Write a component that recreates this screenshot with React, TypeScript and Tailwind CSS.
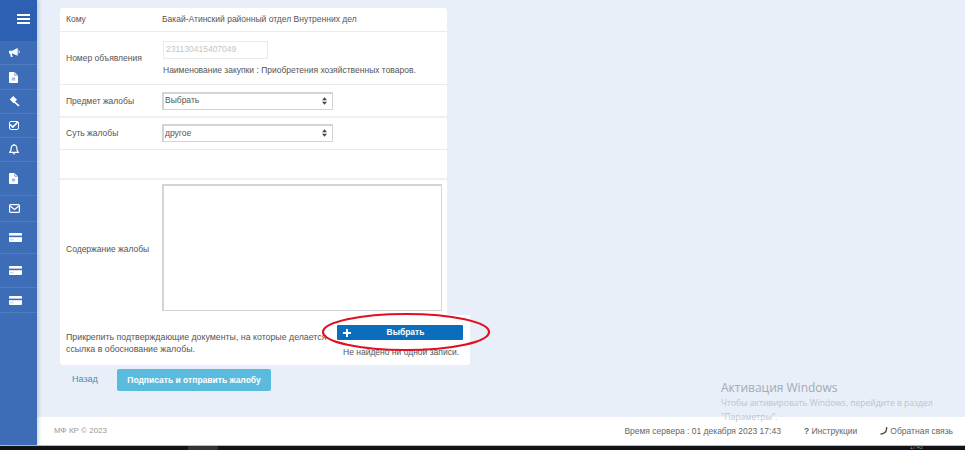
import { Check } from 'lucide-react'

function BullhornIcon() {
  return (
    <svg viewBox="0 0 12 11" className="w-[11px] h-[11px]">
      <path d="M0 3.5h3.5L9.5 .5v8.5L3.5 6.5H3L4 10.5H2L1.2 6.5H0z" fill="#fff" />
      <path d="M10.5 3.2c1 .6 1 2.6 0 3.2" fill="none" stroke="#fff" strokeWidth="1" />
    </svg>
  )
}

function FileIcon() {
  return (
    <svg viewBox="0 0 9 11" className="w-[9px] h-[11px]">
      <path d="M0 .8C0 .3.3 0 .8 0H5.5L9 3.5V10.2c0 .5-.3.8-.8.8H.8C.3 11 0 10.7 0 10.2z" fill="#fff" />
      <path d="M5.7 .4V3.3H8.6" fill="none" stroke="#3e6db8" strokeWidth=".6" />
      <rect x="2.8" y="5.5" width="3.4" height="3" fill="#a9bfe2" />
    </svg>
  )
}

function GavelIcon() {
  return (
    <svg viewBox="0 0 11 11" className="w-[11px] h-[11px]">
      <path d="M4.2 0 8 3.8 4.6 7.2.8 3.4z" fill="#fff" />
      <path d="M6 5.4 10.6 9.2 9.4 10.6 4.9 6.5z" fill="#fff" />
    </svg>
  )
}

function CheckBoxIcon() {
  return (
    <div className="relative w-[10px] h-[9px] border-[1.5px] border-white rounded-[2px]">
      <Check className="absolute left-[-1px] top-[-2px] w-[10px] h-[10px] text-white" strokeWidth={4} />
    </div>
  )
}

function BellIcon() {
  return (
    <svg viewBox="0 0 10 11" className="w-[10px] h-[11px]">
      <path d="M5 1C3 1 2.2 2.6 2.2 4.2 2.2 6.6 1.6 7.4.7 8.4H9.3C8.4 7.4 7.8 6.6 7.8 4.2 7.8 2.6 7 1 5 1z" fill="none" stroke="#fff" strokeWidth="1.2" />
      <circle cx="5" cy=".8" r=".8" fill="#fff" />
      <path d="M3.8 9.3a1.2 1.2 0 0 0 2.4 0z" fill="#fff" />
    </svg>
  )
}

function MailIcon() {
  return (
    <svg viewBox="0 0 11 9" className="w-[11px] h-[9px]">
      <rect x=".6" y=".6" width="9.8" height="7.8" rx="1" fill="none" stroke="#fff" strokeWidth="1.2" />
      <path d="M1 2 5.5 5.4 10 2" fill="none" stroke="#fff" strokeWidth="1.2" />
    </svg>
  )
}

function CardIcon() {
  return (
    <svg viewBox="0 0 13 9" className="w-[13px] h-[9px]">
      <rect width="13" height="9" rx="1" fill="#fff" />
      <rect y="2.6" width="13" height="1.6" fill="#3e6db8" />
      <rect x="1" y="6.4" width="3.5" height=".8" fill="#a9bfe2" />
    </svg>
  )
}

const navItems = [
  { icon: <BullhornIcon />, h: 'h-[24px]' },
  { icon: <FileIcon />, h: 'h-[25px]' },
  { icon: <GavelIcon />, h: 'h-[24px]' },
  { icon: <CheckBoxIcon />, h: 'h-[24px]' },
  { icon: <BellIcon />, h: 'h-[24px]' },
  { icon: <FileIcon />, h: 'h-[34px]' },
  { icon: <MailIcon />, h: 'h-[26px]' },
  { icon: <CardIcon />, h: 'h-[32px]' },
  { icon: <CardIcon />, h: 'h-[34px]' },
  { icon: <CardIcon />, h: 'h-[25px]' },
]

function SelectBox({ value }: { value: string }) {
  return (
    <div className="w-[171px] h-[18px] flex items-center justify-between pl-[1px] pr-[5px] pb-[1px] bg-white border border-[#d4d4d4] border-l-2 border-t-2 text-[8.5px] text-[#555]">
      <span>{value}</span>
      <svg viewBox="0 0 6 9" className="w-[5px] h-[8px]">
        <path d="M3 0 6 3.6H0zM3 9 0 5.4H6z" fill="#444" />
      </svg>
    </div>
  )
}

export default function App() {
  return (
    <div className="relative w-[965px] h-[450px] overflow-hidden flex flex-col bg-[#e8eff8] font-['Liberation_Sans',sans-serif]">
      <div className="flex-1 min-h-0 flex">
        <aside className="w-[37px] shrink-0 bg-[#3e6db8] text-white shadow-[2px_0_3px_rgba(90,110,150,0.25)] z-10">
          <div className="h-[41px] flex items-start justify-end pr-[7px] pt-[14px] bg-[#2d5fb2]">
            <div className="w-[13px] flex flex-col gap-[2px]">
              <div className="h-[2px] bg-white" />
              <div className="h-[2px] bg-white" />
              <div className="h-[2px] bg-white" />
            </div>
          </div>
          {navItems.map((item, i) => (
            <div key={i} className={`${item.h} flex items-center pl-[9px] border-b border-[#4f7cc2]`}>
              {item.icon}
            </div>
          ))}
        </aside>

        <main className="flex-1 min-w-0 flex flex-col">
          <div className="flex-1 min-h-0 pl-[23px] pt-[8px]">
            <div className="w-[387px] bg-white rounded-t-[3px] text-[8.5px] text-[#555]">
              <div className="h-[24px] flex items-center border-b border-[#ebebeb]">
                <span className="w-[102px] pl-[6px] shrink-0">Кому</span>
                <span>Бакай-Атинский районный отдел Внутренних дел</span>
              </div>

              <div className="h-[53px] flex items-center border-b border-[#ebebeb] pt-[1px]">
                <span className="w-[102px] pl-[6px] shrink-0">Номер объявления</span>
                <div className="pl-[1px]">
                  <div className="w-[105px] h-[18px] flex items-center pl-[2px] border border-[#ebebeb] text-[8.5px] text-[#c4c4c4]">231130415407049</div>
                  <div className="mt-[5px]">Наименование закупки : Приобретения хозяйственных товаров.</div>
                </div>
              </div>

              <div className="h-[33px] flex items-center border-b-2 border-[#f0f0f0]">
                <span className="w-[102px] pl-[6px] shrink-0 pt-[1px]">Предмет жалобы</span>
                <SelectBox value="Выбрать" />
              </div>

              <div className="h-[32px] flex items-center border-b border-[#ebebeb] pb-[1px]">
                <span className="w-[102px] pl-[6px] shrink-0 pt-[1px]">Суть жалобы</span>
                <SelectBox value="другое" />
              </div>

              <div className="h-[30px] border-b-2 border-[#f0f0f0]" />

              <div className="h-[135px] flex items-center">
                <span className="w-[102px] pl-[6px] shrink-0 pt-[4px]">Содержание жалобы</span>
                <div className="w-[280px] h-[127px] bg-white border border-[#d4d4d4] border-l-2 border-t-2" />
              </div>
            </div>

            <div className="w-[410px] h-[50px] bg-white rounded-b-[3px] flex text-[8.5px] text-[#555]">
              <p className="w-[268px] pl-[6px] pt-[16px] leading-[12px] shrink-0 text-[8.8px]">
                Прикрепить подтверждающие документы, на которые делается ссылка в обоснование жалобы.
              </p>
              <div className="ml-[9px]">
                <button className="mt-[10px] w-[126px] h-[15px] relative flex items-center justify-center pl-[11px] bg-[#0a6ebd] rounded-[1px] text-white text-[8.5px] font-bold">
                  <svg viewBox="0 0 8 8" className="absolute left-[6px] w-[8px] h-[8px]">
                    <path d="M3 0h2v3h3v2H5v3H3V5H0V3h3z" fill="#fff" />
                  </svg>
                  Выбрать
                </button>
                <div className="mt-[6px] ml-[6px] leading-[12px] whitespace-nowrap">Не найдено ни одной записи.</div>
              </div>
            </div>

            <div className="flex items-start mt-[4px]">
              <a className="ml-[12px] w-[45px] text-[9px] leading-[12px] text-[#3b8fbe] mt-[4px]">Назад</a>
              <button className="w-[154px] h-[22px] bg-[#5bbbdf] rounded-[2px] text-white text-[8.5px] font-bold">Подписать и отправить жалобу</button>
            </div>
          </div>

          <footer className="h-[28px] shrink-0 bg-white flex items-center pl-[17px] pr-[12px] text-[8.5px] text-[#777]">
            <span className="text-[8px] text-[#999]">МФ КР © 2023</span>
            <span className="ml-auto text-[#666]">Время сервера : 01 декабря 2023 17:43</span>
            <span className="ml-[23px] text-[#666]"><b>?</b> Инструкции</span>
            <span className="ml-[23px] flex items-center gap-[2px] text-[#666]">
              <svg viewBox="0 0 8 8" className="w-[8px] h-[8px]">
                <path d="M6.6.6C6.8 3.8 4.6 6.4 1 6.9" fill="none" stroke="#555" strokeWidth="1.5" strokeLinecap="round" />
              </svg>
              Обратная связь
            </span>
          </footer>
        </main>
      </div>

      <div className="relative h-[5px] shrink-0 bg-[#101418] border-t border-[#bbb]">
        <div className="absolute left-[188px] top-0 w-[30px] h-[4px] bg-[#333]" />
        <span className="absolute left-[910px] top-[-1px] text-[5px] leading-[5px] text-[#999]">17:43</span>
      </div>

      <div className="absolute left-[721px] top-[380px] font-['Open_Sans',sans-serif] pointer-events-none">
        <div className="text-[12px] leading-[16px] text-[#a3abb4]">Активация Windows</div>
        <div className="text-[8.5px] leading-[14px] w-[225px] text-[#bcc4cc]">Чтобы активировать Windows, перейдите в раздел "Параметры".</div>
      </div>

      <svg viewBox="0 0 965 450" className="absolute left-0 top-0 w-[965px] h-[450px] pointer-events-none">
        <ellipse cx="406" cy="332" rx="83" ry="18" fill="none" stroke="#e01020" strokeWidth="2.2" />
      </svg>
    </div>
  )
}
